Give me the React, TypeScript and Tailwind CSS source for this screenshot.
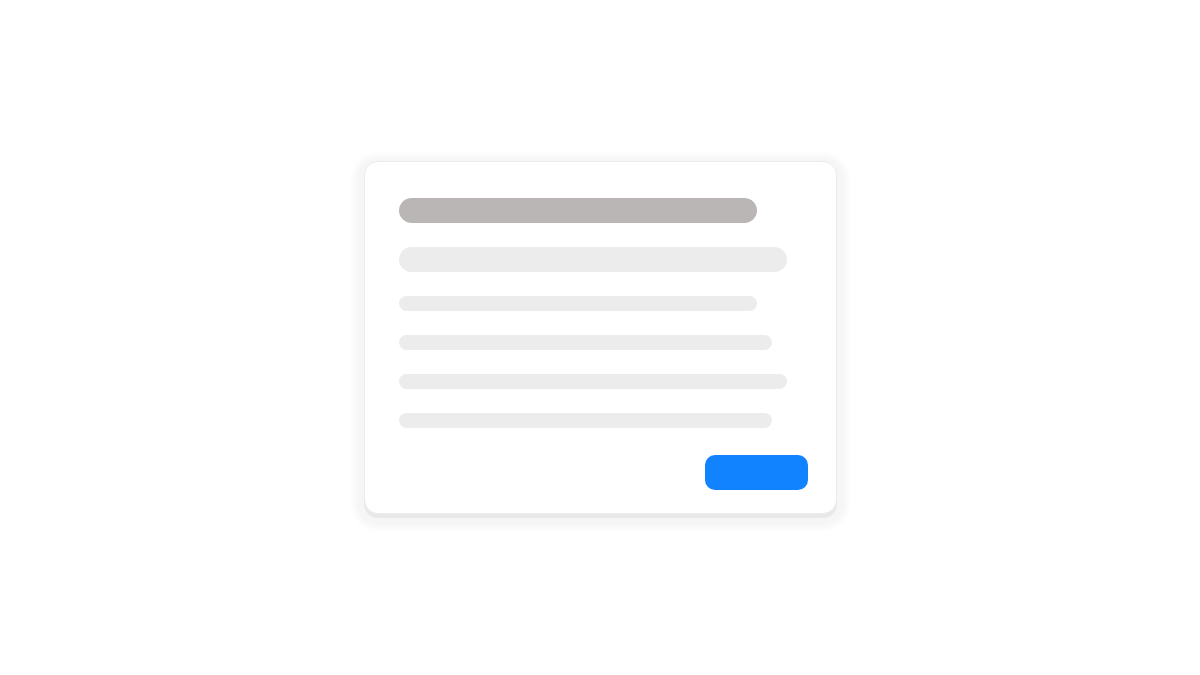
export default function App() {
  const lines = [
    { w: 'w-[358px]', mt: 'mt-[24px]' },
    { w: 'w-[373px]', mt: 'mt-[24px]' },
    { w: 'w-[388px]', mt: 'mt-[24px]' },
    { w: 'w-[373px]', mt: 'mt-[24px]' },
  ]

  return (
    <main className="flex h-[675px] w-full items-center justify-center bg-white pb-[1px]">
      <div className="flex h-[353px] w-[473px] flex-col rounded-[14px] border border-[#ececec] bg-white pt-[36px] pb-[23px] pl-[34px] pr-[28px] shadow-[0_4px_0_#e8e8e8,0_4px_6px_10px_rgba(0,0,0,0.04)]">
        <div className="h-[25px] w-[358px] rounded-full bg-[#bab6b5]" />
        <div className="mt-[24px] h-[25px] w-[388px] rounded-full bg-[#ececec]" />
        {lines.map((line, i) => (
          <div
            key={i}
            className={`${line.w} ${line.mt} h-[15px] rounded-full bg-[#ececec]`}
          />
        ))}
        <div className="mt-auto flex justify-end">
          <div className="h-[35px] w-[103px] rounded-[10px] bg-[#1283ff]" />
        </div>
      </div>
    </main>
  )
}
